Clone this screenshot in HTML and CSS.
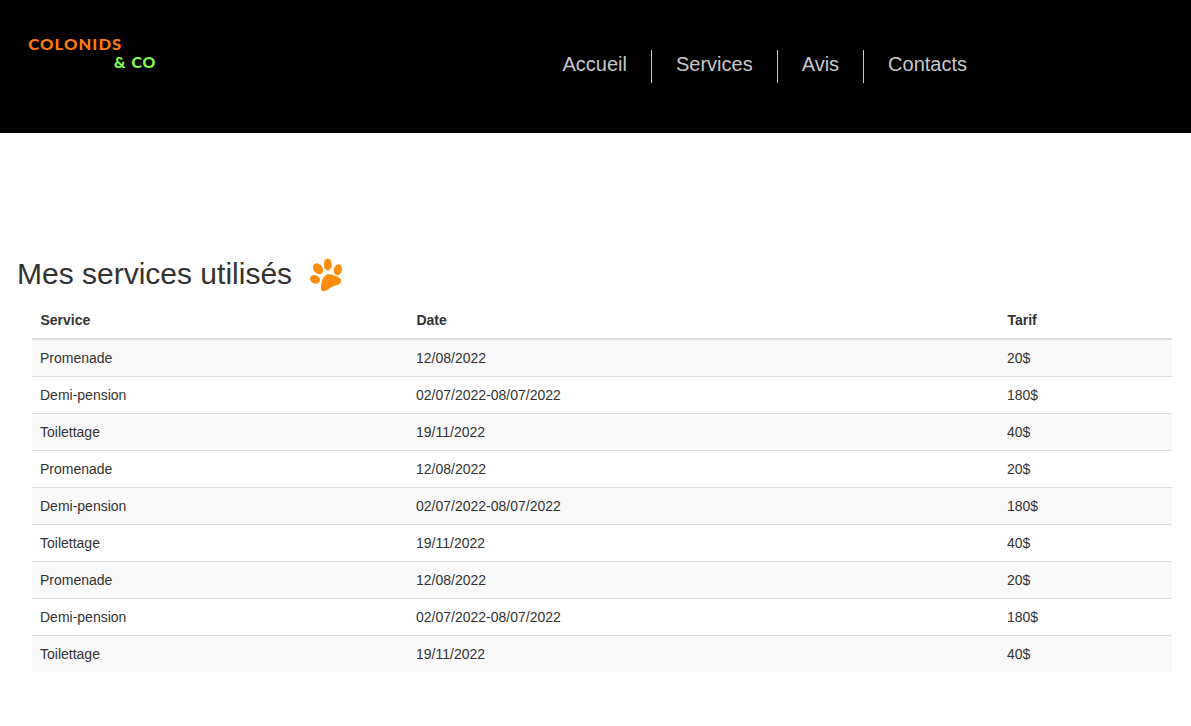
FILE: index.html
```html
<!DOCTYPE html>
<html lang="fr">
<head>
<meta charset="utf-8">
<title>Colonids &amp; Co</title>
<link rel="stylesheet" href="styles.css">
</head>
<body>
<header class="header">
  <svg class="logo" width="140" height="44" viewBox="0 0 140 44" role="img" aria-label="Colonids &amp; Co">
    <text class="logo-top" x="8.3" y="20" textLength="94" lengthAdjust="spacingAndGlyphs">COLONIDS</text>
    <text class="logo-bottom" x="94" y="38.4" textLength="42.5" lengthAdjust="spacingAndGlyphs">&amp; CO</text>
  </svg>
  <nav class="nav">
    <a class="nav-link">Accueil</a>
    <a class="nav-link">Services</a>
    <a class="nav-link">Avis</a>
    <a class="nav-link">Contacts</a>
  </nav>
</header>
<main class="main">
  <h2 class="title"><span class="title-text">Mes services utilisés</span>
    <svg class="paw" width="34" height="34" viewBox="0 0 34 34" aria-hidden="true">
      <ellipse cx="6" cy="21.4" rx="5.2" ry="4.1" transform="rotate(22 6 21.4)"/>
      <ellipse cx="9" cy="10.8" rx="4.5" ry="6" transform="rotate(-38 9 10.8)"/>
      <ellipse cx="18.8" cy="6.6" rx="4" ry="6"/>
      <ellipse cx="28.9" cy="11.7" rx="4.1" ry="5.5" transform="rotate(14 28.9 11.7)"/>
      <path d="M16.3 17.6C19 15.2 23.5 16.4 27 18.1C30 19.4 32.3 20.3 32 23C31.6 27.2 27.5 27 23.8 28.4C20 30 17.6 33.2 14.6 33.2C11.6 33.2 11.7 29.8 12.2 26.6C12.8 22.5 14 19.6 16.3 17.6Z"/>
    </svg>
  </h2>
  <table class="table">
    <colgroup><col class="col-service"><col class="col-date"><col class="col-price"></colgroup>
    <thead><tr><th>Service</th><th>Date</th><th>Tarif</th></tr></thead>
    <tbody>
      <tr><td>Promenade</td><td>12/08/2022</td><td>20$</td></tr>
      <tr><td>Demi-pension</td><td>02/07/2022-08/07/2022</td><td>180$</td></tr>
      <tr><td>Toilettage</td><td>19/11/2022</td><td>40$</td></tr>
      <tr><td>Promenade</td><td>12/08/2022</td><td>20$</td></tr>
      <tr><td>Demi-pension</td><td>02/07/2022-08/07/2022</td><td>180$</td></tr>
      <tr><td>Toilettage</td><td>19/11/2022</td><td>40$</td></tr>
      <tr><td>Promenade</td><td>12/08/2022</td><td>20$</td></tr>
      <tr><td>Demi-pension</td><td>02/07/2022-08/07/2022</td><td>180$</td></tr>
      <tr><td>Toilettage</td><td>19/11/2022</td><td>40$</td></tr>
    </tbody>
  </table>
</main>
</body>
</html>
```
FILE: styles.css
```css
* { box-sizing: border-box; }
body {
  margin: 0;
  background: #fff;
  color: #333;
  font: 14px/20px "Liberation Sans", Arial, sans-serif;
}
.header {
  display: flex;
  align-items: flex-start;
  height: 133px;
  padding: 30px 20px;
  background: #000;
}
.logo {
  flex: none;
  margin-right: 378.5px;
  font: 900 15px Lato, sans-serif;
  letter-spacing: 1px;
}
.logo-top { fill: #ff7a0d; }
.logo-bottom { fill: #80ff4d; }
.nav { display: flex; margin-top: 20px; }
.nav-link {
  height: 33px;
  padding: 0 24px;
  border-right: 1px solid #c8c8c8;
  color: #c8c8c8;
  font-size: 20px;
  line-height: 28px;
}
.nav-link:last-child { border-right: 0; }
.main { padding: 124px 19px 0 17px; }
.title {
  display: flex;
  align-items: center;
  gap: 17px;
  height: 34px;
  margin: 0 0 11px;
  font-size: 30px;
  font-weight: 400;
  line-height: 33px;
}
.title-text { margin-bottom: 2px; }
.paw { flex: none; margin-top: 1px; fill: #ff8e0d; }
.table {
  width: 1140px;
  margin-left: 15px;
  table-layout: fixed;
  border-spacing: 0;
}
.col-service { width: 376px; }
.col-date { width: 591px; }
.table th {
  height: 38px;
  padding: 8px 8px 8px 8.4px;
  border-bottom: 2px solid #ddd;
  text-align: left;
}
.table td { padding: 8px; border-top: 1px solid #ddd; }
.table tbody tr:first-child td { border-top: 0; }
.table tbody tr:nth-child(odd) { background: #f9f9f9; }
```
